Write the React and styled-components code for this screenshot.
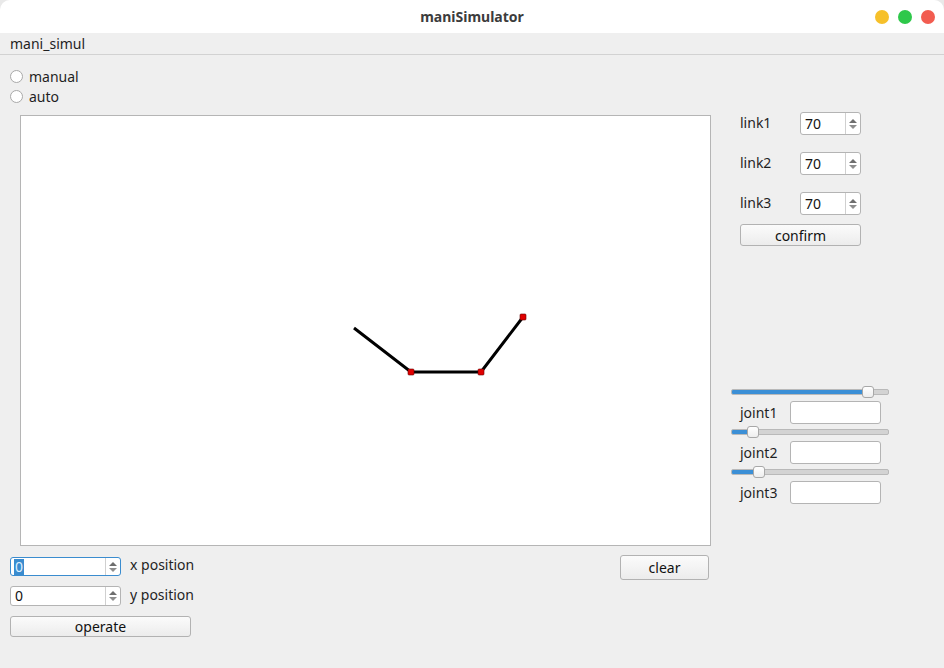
import React from "react";
import styled, { createGlobalStyle } from "styled-components";

const GlobalStyle = createGlobalStyle`
  html, body {
    margin: 0;
    padding: 0;
    background: #e9e9e9;
  }
  body {
    font-family: "Noto Sans", "DejaVu Sans", sans-serif;
    font-size: 14px;
    color: #1f1f1f;
  }
`;

const Window = styled.div`
  width: 944px;
  height: 668px;
  background: #efefef;
  border-radius: 10px 10px 0 0;
  overflow: hidden;
  display: flex;
  flex-direction: column;
`;

const TitleBar = styled.div`
  height: 33px;
  background: #ffffff;
  display: flex;
  align-items: center;
  justify-content: center;
  position: relative;
  font-weight: bold;
  font-size: 14px;
  color: #3c3c3c;
`;

const Lights = styled.div`
  position: absolute;
  right: 9px;
  top: 10px;
  display: flex;
  gap: 9px;
`;

const Light = styled.span`
  width: 14px;
  height: 14px;
  border-radius: 50%;
  background: ${(p) => p.color};
`;

const MenuBar = styled.div`
  height: 21px;
  padding-left: 10px;
  display: flex;
  align-items: center;
  border-bottom: 1px solid #d2d2d2;
`;

const Radios = styled.div`
  display: flex;
  flex-direction: column;
  padding: 11px 0 0 10px;
`;

const RadioRow = styled.label`
  height: 20px;
  display: flex;
  align-items: center;
  gap: 6px;
`;

const RadioCircle = styled.span`
  width: 13px;
  height: 13px;
  border-radius: 50%;
  border: 1px solid #a9a9a9;
  background: #fff;
  box-sizing: border-box;
`;

const Row = styled.div`
  display: flex;
  margin-top: 6px;
`;

const LeftCol = styled.div`
  width: 711px;
  display: flex;
  flex-direction: column;
`;

const Canvas = styled.div`
  position: relative;
  margin: 3px 0 0 20px;
  width: 691px;
  height: 431px;
  background: #ffffff;
  border: 1px solid #b5b5b5;
  box-sizing: border-box;
`;

const Drawing = styled.svg`
  position: absolute;
  left: 0;
  top: 0;
`;

const Bottom = styled.div`
  display: flex;
  justify-content: space-between;
  padding: 9px 2px 0 10px;
`;

const Controls = styled.div`
  display: flex;
  flex-direction: column;
  gap: 10px;
  padding-top: 2px;
`;

const FieldRow = styled.div`
  display: flex;
  align-items: center;
  gap: 9px;
  line-height: 16px;
`;

const FieldLabel = styled.span`
  margin-top: -3px;
`;

const SpinBox = styled.div`
  width: ${(p) => p.w}px;
  height: ${(p) => p.h}px;
  box-sizing: border-box;
  border: 1px solid ${(p) => (p.focus ? "#3a8ccf" : "#b4b4b4")};
  border-radius: 3px;
  background: #fff;
  display: flex;
  align-items: stretch;
`;

const SpinText = styled.div`
  flex: 1;
  display: flex;
  align-items: center;
  padding-left: ${(p) => p.pad}px;
  font-size: 14px;
  color: #111;
`;

const Selected = styled.span`
  background: #3a8ccf;
  color: #dff0ff;
  padding: 0 1px;
  line-height: 16px;
`;

const Arrows = styled.div`
  width: 14px;
  border-left: 1px solid #d0d0d0;
  display: flex;
  flex-direction: column;
  align-items: center;
  justify-content: center;
  gap: 2px;
`;

const Tri = styled.span`
  width: 0;
  height: 0;
  border-left: 4px solid transparent;
  border-right: 4px solid transparent;
  ${(p) =>
    p.up
      ? "border-bottom: 4px solid #6e6e6e;"
      : "border-top: 4px solid #8e8e8e;"}
`;

const Button = styled.div`
  width: ${(p) => p.w}px;
  height: ${(p) => p.h}px;
  box-sizing: border-box;
  border: 1px solid #b2b2b2;
  border-radius: 3px;
  background: linear-gradient(#fbfbfb, #ececec);
  display: flex;
  align-items: center;
  justify-content: center;
  font-size: 14px;
  color: #111;
`;

const RightCol = styled.div`
  width: 158px;
  margin-left: 20px;
  display: flex;
  flex-direction: column;
`;

const LinkRow = styled.div`
  display: flex;
  align-items: center;
  height: 23px;
  padding-left: 9px;
  margin-bottom: 17px;
`;

const LinkLabel = styled.span`
  width: 60px;
  margin-top: -2px;
`;

const ConfirmWrap = styled.div`
  padding-left: 9px;
  margin-top: -8px;
`;

const Sliders = styled.div`
  margin-top: 140px;
  display: flex;
  flex-direction: column;
`;

const Slider = styled.div`
  position: relative;
  width: 158px;
  height: 12px;
  display: flex;
  align-items: center;
`;

const Groove = styled.div`
  width: 100%;
  height: 4px;
  border-radius: 2px;
  background: #d3d3d3;
  border: 1px solid #b9b9b9;
  box-sizing: content-box;
  overflow: hidden;
  display: flex;
`;

const Fill = styled.div`
  background: #3b8fd6;
  border-right: 1px solid #2a6fb0;
  height: 100%;
`;

const Handle = styled.div`
  position: absolute;
  top: 0;
  width: 12px;
  height: 12px;
  box-sizing: border-box;
  border: 1px solid #a8a8a8;
  border-radius: 3px;
  background: linear-gradient(#ffffff, #eeeeee);
`;

const JointRow = styled.div`
  display: flex;
  align-items: center;
  padding-left: 9px;
  height: 23px;
  margin: 3px 0 2px;
`;

const JointLabel = styled.span`
  width: 50px;
`;

const TextBox = styled.div`
  width: 91px;
  height: 23px;
  box-sizing: border-box;
  border: 1px solid #b4b4b4;
  border-radius: 3px;
  background: #fff;
`;

const Spin = ({ value, w, h, focus, pad = 4 }) => (
  <SpinBox w={w} h={h} focus={focus}>
    <SpinText pad={pad}>{focus ? <Selected>{value}</Selected> : value}</SpinText>
    <Arrows>
      <Tri up />
      <Tri />
    </Arrows>
  </SpinBox>
);

const JointSlider = ({ value }) => {
  const pos = Math.round(value * 146);
  return (
    <Slider>
      <Groove>
        <Fill style={{ width: pos + 4 }} />
      </Groove>
      <Handle style={{ left: pos }} />
    </Slider>
  );
};

const Robot = () => {
  // canvas inner origin is at (21, 116) in window coords
  const pts = [
    [354, 328],
    [411, 372],
    [481, 372],
    [523, 317],
  ].map(([x, y]) => [x - 21, y - 116]);
  const d = pts.map((p, i) => (i ? "L" : "M") + p[0] + " " + p[1]).join(" ");
  return (
    <Drawing width="689" height="429">
      <path d={d} stroke="#000" strokeWidth="3" fill="none" />
      {pts.slice(1).map((p, i) => (
        <rect
          key={i}
          x={p[0] - 3}
          y={p[1] - 3}
          width="6"
          height="6"
          rx="1"
          fill="#e00000"
          stroke="#600"
          strokeWidth="0.6"
        />
      ))}
    </Drawing>
  );
};

const App = () => {
  return (
    <Window>
      <GlobalStyle />
      <TitleBar>
        maniSimulator
        <Lights>
          <Light color="#f6c02a" />
          <Light color="#2ec84a" />
          <Light color="#f25c50" />
        </Lights>
      </TitleBar>
      <MenuBar>mani_simul</MenuBar>
      <Radios>
        <RadioRow>
          <RadioCircle />
          manual
        </RadioRow>
        <RadioRow>
          <RadioCircle />
          auto
        </RadioRow>
      </Radios>
      <Row>
        <LeftCol>
          <Canvas>
            <Robot />
          </Canvas>
          <Bottom>
            <Controls>
              <FieldRow>
                <Spin value="0" w={111} h={19} focus pad={3} />
                <FieldLabel>x position</FieldLabel>
              </FieldRow>
              <FieldRow>
                <Spin value="0" w={111} h={20} />
                <FieldLabel>y position</FieldLabel>
              </FieldRow>
              <Button w={181} h={21}>
                operate
              </Button>
            </Controls>
            <div>
              <Button w={89} h={25}>
                clear
              </Button>
            </div>
          </Bottom>
        </LeftCol>
        <RightCol>
          {["link1", "link2", "link3"].map((l) => (
            <LinkRow key={l}>
              <LinkLabel>{l}</LinkLabel>
              <Spin value="70" w={61} h={23} />
            </LinkRow>
          ))}
          <ConfirmWrap>
            <Button w={121} h={22}>
              confirm
            </Button>
          </ConfirmWrap>
          <Sliders>
            {[
              ["joint1", 0.9],
              ["joint2", 0.11],
              ["joint3", 0.15],
            ].map(([j, v]) => (
              <React.Fragment key={j}>
                <JointSlider value={v} />
                <JointRow>
                  <JointLabel>{j}</JointLabel>
                  <TextBox />
                </JointRow>
              </React.Fragment>
            ))}
          </Sliders>
        </RightCol>
      </Row>
    </Window>
  );
};

export default App;
